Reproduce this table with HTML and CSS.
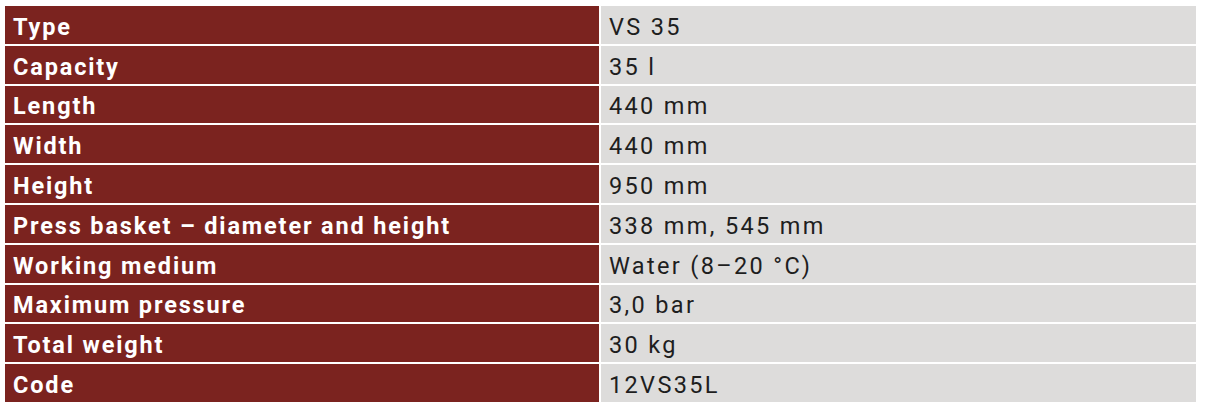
FILE: index.html
```html
<!DOCTYPE html>
<html>
<head>
<meta charset="utf-8">
<link rel="stylesheet" href="styles.css">
</head>
<body>
<div class="specs">
  <div class="label">Type</div><div class="value">VS 35</div>
  <div class="label">Capacity</div><div class="value">35 l</div>
  <div class="label">Length</div><div class="value">440 mm</div>
  <div class="label">Width</div><div class="value">440 mm</div>
  <div class="label">Height</div><div class="value">950 mm</div>
  <div class="label">Press basket – diameter and height</div><div class="value">338 mm, 545 mm</div>
  <div class="label">Working medium</div><div class="value">Water (8–20 °C)</div>
  <div class="label">Maximum pressure</div><div class="value">3,0 bar</div>
  <div class="label">Total weight</div><div class="value">30 kg</div>
  <div class="label">Code</div><div class="value">12VS35L</div>
</div>
</body>
</html>
```
FILE: styles.css
```css
html, body {
  margin: 0;
  padding: 0;
  background: #ffffff;
}
.specs {
  display: grid;
  grid-template-columns: 594px 595px;
  grid-auto-rows: 37.8px;
  gap: 2px;
  padding: 6px 0 0 5px;
  font-family: Roboto, "Liberation Sans", sans-serif;
  font-size: 23.5px;
}
.label, .value {
  display: flex;
  align-items: center;
  padding: 4px 0 0 8px;
  box-sizing: border-box;
  white-space: nowrap;
}
.label {
  background: #7b231f;
  color: #ffffff;
  font-weight: 700;
  letter-spacing: 1.85px;
}
.value {
  background: #dddcdb;
  color: #1e1e1e;
  font-weight: 400;
  letter-spacing: 2.35px;
}
```
